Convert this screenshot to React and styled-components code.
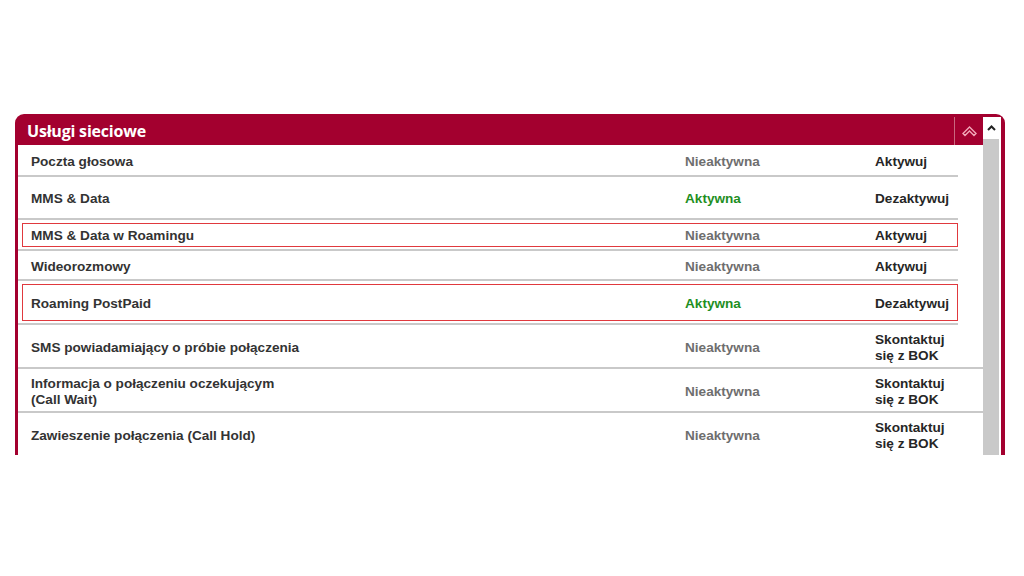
import React from "react";
import styled, { createGlobalStyle } from "styled-components";

const GlobalStyle = createGlobalStyle`
  html, body {
    margin: 0;
    padding: 0;
    background: #fff;
  }
  * { box-sizing: border-box; }
`;

const Page = styled.div`
  width: 1024px;
  height: 576px;
  overflow: hidden;
  padding: 114px 0 0 15px;
  font-family: "Liberation Sans", Arial, sans-serif;
`;

const Panel = styled.section`
  width: 990px;
  height: 341px;
  background: #a3002f;
  border-radius: 9px 9px 0 0;
  padding: 3px 4px 0 3px;
  display: flex;
  overflow: hidden;
`;

const Main = styled.div`
  flex: 1;
  display: flex;
  flex-direction: column;
  min-width: 0;
`;

const Header = styled.div`
  height: 28px;
  display: flex;
  align-items: stretch;
  justify-content: space-between;
`;

const Title = styled.h2`
  margin: 0;
  padding-left: 9px;
  display: flex;
  align-items: center;
  color: #fff;
  font-family: "Open Sans", "Liberation Sans", sans-serif;
  font-size: 16px;
  font-weight: 700;
  letter-spacing: -0.2px;
`;

const Toggle = styled.button`
  width: 29px;
  border: none;
  border-left: 1px solid #c9687f;
  background: transparent;
  padding: 0;
  display: flex;
  align-items: center;
  justify-content: center;
  cursor: pointer;
`;

const Body = styled.div`
  flex: 1;
  background: #fff;
  overflow: hidden;
`;

const Row = styled.div`
  position: relative;
  height: ${(p) => p.$h}px;
  margin-right: ${(p) => (p.$short ? 25 : 0)}px;
  border-bottom: 2px solid #c9c9c9;
  display: grid;
  grid-template-columns: 654px 190px 1fr;
  align-items: center;
  padding: 3px 0 0 13px;
  font-size: 13.6px;
  font-weight: 700;
  line-height: 16px;
  color: #333;

  &::after {
    content: "";
    display: ${(p) => (p.$marked ? "block" : "none")};
    position: absolute;
    left: 4px;
    right: 0;
    top: 3px;
    bottom: 2px;
    border: 1.5px solid #e0393e;
  }
`;

const Name = styled.div``;

const Status = styled.div`
  color: ${(p) => (p.$active ? "#1f8f1f" : "#6e6e6e")};
`;

const Action = styled.div`
  color: #262626;
`;

const ScrollBar = styled.div`
  width: 18px;
  background: #fff;
  padding-right: 2px;
  display: flex;
  flex-direction: column;
`;

const ScrollButton = styled.div`
  height: 22px;
  display: flex;
  align-items: center;
  justify-content: center;
`;

const Thumb = styled.div`
  flex: 1;
  background: #c9c9c9;
`;

const rows = [
  { name: "Poczta głosowa", active: false, action: "Aktywuj", h: 32, short: true },
  { name: "MMS & Data", active: true, action: "Dezaktywuj", h: 43, short: true },
  { name: "MMS & Data w Roamingu", active: false, action: "Aktywuj", h: 31, short: true, marked: true },
  { name: "Wideorozmowy", active: false, action: "Aktywuj", h: 30, short: true },
  { name: "Roaming PostPaid", active: true, action: "Dezaktywuj", h: 44, short: true, marked: true },
  { name: "SMS powiadamiający o próbie połączenia", active: false, action: ["Skontaktuj", "się z BOK"], h: 44 },
  { name: ["Informacja o połączeniu oczekującym", "(Call Wait)"], active: false, action: ["Skontaktuj", "się z BOK"], h: 44 },
  { name: "Zawieszenie połączenia (Call Hold)", active: false, action: ["Skontaktuj", "się z BOK"], h: 44 },
];

const Lines = ({ text }) =>
  Array.isArray(text)
    ? text.map((t, i) => (
        <React.Fragment key={i}>
          {i > 0 && <br />}
          {t}
        </React.Fragment>
      ))
    : text;

const CollapseIcon = () => (
  <svg width="15" height="11" viewBox="0 0 15 11">
    <path
      d="M1 7.5 L7.5 1 L14 7.5 L12 9.5 L7.5 5 L3 9.5 Z"
      fill="none"
      stroke="#f2a7b8"
      strokeWidth="1.4"
      strokeLinejoin="miter"
    />
  </svg>
);

const UpArrow = () => (
  <svg width="9" height="6" viewBox="0 0 9 6">
    <path d="M1 5 L4.5 1.5 L8 5" fill="none" stroke="#222" strokeWidth="2" />
  </svg>
);

export default function App() {
  return (
    <Page>
      <GlobalStyle />
      <Panel>
        <Main>
          <Header>
            <Title>Usługi sieciowe</Title>
            <Toggle aria-label="Zwiń">
              <CollapseIcon />
            </Toggle>
          </Header>
          <Body>
            {rows.map((r, i) => (
              <Row key={i} $h={r.h} $short={r.short} $marked={r.marked}>
                <Name>
                  <Lines text={r.name} />
                </Name>
                <Status $active={r.active}>{r.active ? "Aktywna" : "Nieaktywna"}</Status>
                <Action>
                  <Lines text={r.action} />
                </Action>
              </Row>
            ))}
          </Body>
        </Main>
        <ScrollBar>
          <ScrollButton>
            <UpArrow />
          </ScrollButton>
          <Thumb />
        </ScrollBar>
      </Panel>
    </Page>
  );
}
